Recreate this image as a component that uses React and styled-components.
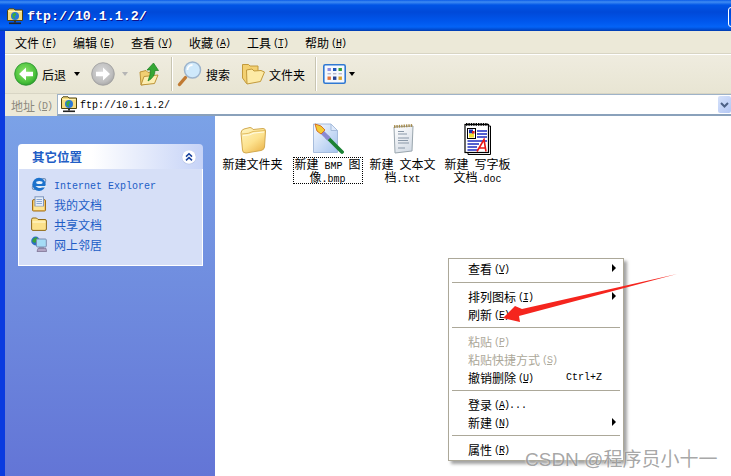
import styled, { createGlobalStyle } from 'styled-components';

const Global = createGlobalStyle`
    html, body { margin: 0; padding: 0; background: #fff; }
    body { font-family: "Noto Sans CJK SC", "Liberation Sans", sans-serif; font-size: 12px; color: #000; }
`;

const menus = [
    ['文件', 'F'], ['编辑', 'E'], ['查看', 'V'], ['收藏', 'A'], ['工具', 'T'], ['帮助', 'H'],
];

const places = [
    { icon: 'ie', label: 'Internet Explorer', latin: true },
    { icon: 'docs', label: '我的文档' },
    { icon: 'shared', label: '共享文档' },
    { icon: 'net', label: '网上邻居' },
];

function BigFolder() {
    return (
        <svg width="32" height="32" viewBox="0 0 32 32">
            <defs>
                <linearGradient id="fold" x1="0" y1="0" x2="0.7" y2="1">
                    <stop offset="0" stopColor="#fff6c4" />
                    <stop offset="0.6" stopColor="#fde28e" />
                    <stop offset="1" stopColor="#eebb55" />
                </linearGradient>
            </defs>
            <path d="M4 10 Q4 7 7 6 L13 4.5 Q15 4.5 16 6.5 L26 5.5 Q28.5 5.5 28.5 8 L27.5 24 Q27 27 24 27.5 L9 30 Q5.5 30 5.5 27 Z" fill="url(#fold)" stroke="#d2a94f" strokeWidth="1" />
            <path d="M5 11 Q12 11 16 8.5 L28 7.5" fill="none" stroke="#e2bd62" strokeWidth="1" />
            <path d="M6 12.5 Q13 12.5 17 10 L27 9" fill="none" stroke="#fffbe4" strokeWidth="1" />
        </svg>
    );
}

function NetFolder() {
    return (
        <svg width="16" height="17" viewBox="0 0 16 17">
            <path d="M0.5 2.5 L2 0.8 H7 L8 2 H15.5 V12.5 H0.5 Z" fill="#f6dc7e" stroke="#4e4310" />
            <rect x="1.5" y="3" width="13" height="1" fill="#fff3b4" />
            <circle cx="8" cy="8" r="4" fill="#2b78d8" />
            <path d="M5.4 6.3 L8 4.4 L9.4 6.4 L7.4 8.4 L8.2 11 L5.6 9.4 Z" fill="#3cac38" />
            <rect x="7" y="12.5" width="2" height="2" fill="#333" />
            <rect x="2" y="14.5" width="12" height="1.6" fill="#222" />
        </svg>
    );
}

function NavCircle({ grey }) {
    const id = grey ? 'navg' : 'nava';
    return (
        <svg width="24" height="24" viewBox="0 0 24 24">
            <defs>
                <radialGradient id={id} cx="0.45" cy="0.4" r="0.65">
                    <stop offset="0" stopColor={grey ? '#d9d9d9' : '#8ee46c'} />
                    <stop offset="0.7" stopColor={grey ? '#bebebe' : '#4cc23c'} />
                    <stop offset="1" stopColor={grey ? '#a2a2a2' : '#229a26'} />
                </radialGradient>
            </defs>
            <circle cx="12" cy="12" r="11.3" fill={`url(#${id})`} stroke={grey ? '#9c9c9c' : '#2a8f2e'} strokeWidth="0.8" />
            {grey
                ? <path d="M5 9.8 H12 V5.6 L19 12 L12 18.4 V14.2 H5 Z" fill="#fff" />
                : <path d="M19 9.8 H12 V5.6 L5 12 L12 18.4 V14.2 H19 Z" fill="#fff" />}
        </svg>
    );
}

function UpFolder() {
    return (
        <svg width="20" height="24" viewBox="0 0 20 24">
            <path d="M1 10 L7 8.5 L9 10.5 L12 10 L13 21 L2 23 Z" fill="#f2cf72" stroke="#bd9438" />
            <path d="M2 23 L5 14.5 L19 13 L15.5 21.5 Z" fill="#fdeeb0" stroke="#bd9438" />
            <path d="M9 19 Q11.5 13 11.5 8 H8 L14.5 1 L19.5 8.5 H16 Q16 15 9 19 Z" fill="#35a734" stroke="#1a7c22" strokeWidth="0.7" />
        </svg>
    );
}

function Magnifier() {
    return (
        <svg width="25" height="26" viewBox="0 0 25 26">
            <path d="M8.5 16.5 L2.5 23.5" stroke="#c07a33" strokeWidth="3.4" strokeLinecap="round" />
            <circle cx="15.5" cy="9" r="8" fill="#cfe9fb" stroke="#9db4cc" strokeWidth="1.5" />
            <path d="M10.5 9 A5 5 0 0 1 15.5 4" fill="none" stroke="#fff" strokeWidth="1.8" />
        </svg>
    );
}

function OpenFolders() {
    return (
        <svg width="23" height="22" viewBox="0 0 23 22">
            <path d="M0.5 1.5 H6.5 L8 3 H16 V15 L4.5 20.5 L0.5 15 Z" fill="#f3d071" stroke="#c29a3c" />
            <path d="M5 21 L4.5 7 L10 6 L12 8 L19 7.5 L22.5 9 L18.5 18.5 Z" fill="#fdeaa6" stroke="#c29a3c" />
        </svg>
    );
}

function Views() {
    return (
        <svg width="23" height="20" viewBox="0 0 23 20">
            <rect x="0.8" y="0.8" width="21.4" height="18.4" rx="1.5" fill="#f6f8fd" stroke="#2f78d2" strokeWidth="1.6" />
            {[
                [4.5, 4, 3, '#8c8ce0'], [10, 4, 3, '#1f56b8'], [15.5, 4, 3, '#34a03a'],
                [4.5, 9, 1.4, '#b8b8cc'], [10, 9, 1.4, '#b8b8cc'], [15.5, 9, 1.4, '#b8b8cc'],
                [4.5, 12.5, 3.4, '#e8743a'], [10, 12.5, 3.4, '#24408f'], [15.5, 12.5, 3.4, '#d9a52c'],
            ].map(([x, y, h, c]) => <rect key={`${x}${y}`} x={x} y={y} width="3.4" height={h} fill={c} />)}
        </svg>
    );
}

function Chevrons() {
    return (
        <svg width="16" height="16" viewBox="0 0 16 16">
            <circle cx="8" cy="8.4" r="7.2" fill="#b9c5e6" />
            <circle cx="8" cy="8" r="6.8" fill="#fff" />
            <path d="M5 7.6 L8 4.8 L11 7.6 M5 11.4 L8 8.6 L11 11.4" fill="none" stroke="#16409c" strokeWidth="1.5" />
        </svg>
    );
}

function PlaceIcon({ kind }) {
    if (kind === 'ie') {
        return (
            <svg width="16" height="16" viewBox="0 0 16 16">
                <ellipse cx="8" cy="8" rx="8" ry="3.4" fill="none" stroke="#6f8fb4" strokeWidth="1" transform="rotate(-35 8 8)" />
                <circle cx="8" cy="8.3" r="6.6" fill="#1c72cc" />
                <ellipse cx="8.4" cy="6.4" rx="3.2" ry="1.5" fill="#e8f2fc" />
                <path d="M4.4 10 H15.5 V11.4 L11 11.6 Q8.8 12.6 6.6 11.6 Z" fill="#e0ecf8" />
            </svg>
        );
    }
    if (kind === 'docs') {
        return (
            <svg width="16" height="16" viewBox="0 0 16 16">
                <path d="M1.5 5 Q1.5 3.5 3 3.5 H13 Q14.5 3.5 14.5 5 V14 Q14.5 15 13.5 15 H2.5 Q1.5 15 1.5 14 Z" fill="#f2c869" stroke="#a36f14" />
                <rect x="4" y="0.8" width="8.5" height="9.5" fill="#e6eefa" stroke="#7f97bd" />
                <path d="M5.5 3.5 H11 M5.5 5.5 H11 M5.5 7.5 H11" stroke="#8ba7d2" />
                <rect x="3" y="10.5" width="10" height="3.5" fill="#fde596" />
            </svg>
        );
    }
    if (kind === 'shared') {
        return (
            <svg width="16" height="14" viewBox="0 0 16 14">
                <path d="M0.6 2.5 Q0.6 1 2 1 H5.5 L7 2.5 H14 Q15.4 2.5 15.4 4 V12 Q15.4 13.4 14 13.4 H2 Q0.6 13.4 0.6 12 Z" fill="#fbe18a" stroke="#8f6a18" />
                <path d="M1.5 5 H14.5" stroke="#fff4c0" strokeWidth="1.4" />
            </svg>
        );
    }
    return (
        <svg width="16" height="16" viewBox="0 0 16 16">
            <circle cx="4.6" cy="5" r="4.4" fill="#2b6fc4" />
            <path d="M2 3 L5.4 1 L6.8 3.6 L4 7 L1.2 5.4 Z" fill="#37a338" />
            <rect x="5.5" y="3" width="9.8" height="8" rx="1" fill="#a4dcf6" stroke="#7c8cb0" />
            <rect x="8" y="11" width="5" height="1.4" fill="#8c94b0" />
            <path d="M6 15.5 L7 12.4 H15 L15.6 15.5 Z" fill="#b3a6c4" stroke="#665a7e" strokeWidth="0.6" />
        </svg>
    );
}

function BmpIcon() {
    return (
        <svg width="32" height="32" viewBox="0 0 32 32">
            <defs>
                <linearGradient id="bmpbg" x1="0" y1="0" x2="1" y2="1">
                    <stop offset="0" stopColor="#f5f9ff" />
                    <stop offset="1" stopColor="#a5c3ee" />
                </linearGradient>
            </defs>
            <path d="M1.5 1 H19 L25.5 7.5 V29.5 H1.5 Z" fill="url(#bmpbg)" stroke="#a6bcdc" />
            <path d="M19 1 V7.5 H25.5 Z" fill="#dfeafb" stroke="#a6bcdc" />
            <path d="M15 14 L30 29" stroke="#1b8234" strokeWidth="3.8" strokeLinecap="round" />
            <path d="M10 9 L17 16" stroke="#8a8ad2" strokeWidth="4.4" />
            <path d="M3 1 L9 3 L13 7 L9 11 L5 8 Z" fill="#f3cc34" stroke="#d5681c" strokeWidth="0.9" />
        </svg>
    );
}

function TxtIcon() {
    return (
        <svg width="24" height="30" viewBox="0 0 24 30">
            <defs>
                <linearGradient id="txtbg" x1="0" y1="0" x2="0.6" y2="1">
                    <stop offset="0" stopColor="#fff" />
                    <stop offset="1" stopColor="#d6dde6" />
                </linearGradient>
            </defs>
            <path d="M3 3 L22 2 L21 27 L4 29 Z" fill="url(#txtbg)" stroke="#9aa6ae" />
            <path d="M3 2.6 L22 1.4" stroke="#a58a4a" strokeWidth="2.8" strokeDasharray="1.4 1" />
            <path d="M7 7.5 H13 M7 10 H16 M7 14 H18 M7 16.5 H17 M7 19 H18 M7 24 H14" stroke="#8a98a8" strokeWidth="1.1" />
        </svg>
    );
}

function DocIcon() {
    return (
        <svg width="27" height="32" viewBox="0 0 27 32">
            <path d="M25 3 H26.5 V31.5 H4 V30" fill="none" stroke="#000" />
            <rect x="1" y="1.5" width="23.5" height="28" fill="#fff" stroke="#000" strokeWidth="1.2" />
            <path d="M2 1.4 H24" stroke="#000" strokeWidth="2.6" strokeDasharray="1.4 1" />
            <rect x="3.5" y="5.5" width="8" height="10" fill="#fff" stroke="#000" />
            <rect x="5" y="6.5" width="4" height="4" fill="#1b2fb0" />
            <rect x="5" y="10.5" width="5" height="4" fill="#f0e030" />
            <rect x="8" y="8" width="2.6" height="2.6" fill="#d82020" />
            <path d="M13 8 H23 M13 11 H23 M13 14 H23 M3.5 18 H23 M3.5 21 H15 M3.5 24 H13 M3.5 27 H14" stroke="#1c2cc0" strokeWidth="1.3" />
            <path d="M13 28.5 L20 16.5 L22 28.5 M15.5 25 H22" fill="none" stroke="#e81818" strokeWidth="1.6" />
        </svg>
    );
}

function Hot({ k }) {
    return <HotKey>(<u>{k}</u>)</HotKey>;
}

function MenuRow({ label, k, off, sub, shortcut, tail }) {
    return (
        <Row $off={off}>
            <span>{label}</span>
            <Hot k={k} />
            {tail && <Tail>{tail}</Tail>}
            {shortcut && <Shortcut>{shortcut}</Shortcut>}
            {sub && <SubArrow />}
        </Row>
    );
}

export default function App() {
    return (
        <>
        <Global />
        <Page>
            <TitleBar>
                <NetFolder />
                <TitleText>ftp://10.1.1.2/</TitleText>
                <CloseEdge />
            </TitleBar>
            <Frame>
                <MenuBar>
                    {menus.map(([name, k]) => (
                        <MenuItem key={k}>{name}<Hot k={k} /></MenuItem>
                    ))}
                </MenuBar>
                <ToolBar>
                    <ToolGroup $w={157}>
                        <NavCircle />
                        <ToolLabel>后退</ToolLabel>
                        <Caret $gap={8} />
                        <Spacer $w={11} />
                        <NavCircle grey />
                        <Caret $gap={7} $grey />
                        <Spacer $w={11} />
                        <UpFolder />
                    </ToolGroup>
                    <ToolSep $after={5} />
                    <ToolGroup $w={138}>
                        <Magnifier />
                        <ToolLabel>搜索</ToolLabel>
                        <Spacer $w={12} />
                        <OpenFolders />
                        <ToolLabel>文件夹</ToolLabel>
                    </ToolGroup>
                    <ToolSep $after={7} />
                    <ToolGroup>
                        <Views />
                        <Caret $gap={3} />
                    </ToolGroup>
                </ToolBar>
                <AddressBar>
                    <AddressLabel>地址<Hot k="D" /></AddressLabel>
                    <AddressField>
                        <NetFolder />
                        <AddressText>ftp://10.1.1.2/</AddressText>
                        <DropButton>
                            <svg width="9" height="6" viewBox="0 0 9 6">
                                <path d="M1 1 L4.5 4.5 L8 1" fill="none" stroke="#4d6185" strokeWidth="2" />
                            </svg>
                        </DropButton>
                    </AddressField>
                </AddressBar>
                <Body>
                    <Sidebar>
                        <Card>
                            <CardHead>
                                <CardTitle>其它位置</CardTitle>
                                <Chevrons />
                            </CardHead>
                            <CardBody>
                                {places.map(p => (
                                    <Place key={p.icon}>
                                        <PlaceIconBox><PlaceIcon kind={p.icon} /></PlaceIconBox>
                                        <PlaceLabel $latin={p.latin}>{p.label}</PlaceLabel>
                                    </Place>
                                ))}
                            </CardBody>
                        </Card>
                    </Sidebar>
                    <Content>
                        <FileItem>
                            <FileIcon><BigFolder /></FileIcon>
                            <FileLabel>新建文件夹</FileLabel>
                        </FileItem>
                        <FileItem>
                            <FileIcon><BmpIcon /></FileIcon>
                            <FileLabel $selected>新建<Latin> BMP </Latin>图像<Latin>.bmp</Latin></FileLabel>
                        </FileItem>
                        <FileItem>
                            <FileIcon><TxtIcon /></FileIcon>
                            <FileLabel>新建<Latin> </Latin>文本文档<Latin>.txt</Latin></FileLabel>
                        </FileItem>
                        <FileItem>
                            <FileIcon><DocIcon /></FileIcon>
                            <FileLabel>新建<Latin> </Latin>写字板文档<Latin>.doc</Latin></FileLabel>
                        </FileItem>
                    </Content>
                </Body>
            </Frame>
            <ContextMenu>
                <MenuRow label="查看" k="V" sub />
                <MenuSep $top={5} />
                <MenuRow label="排列图标" k="I" sub />
                <MenuRow label="刷新" k="E" />
                <MenuSep />
                <MenuRow label="粘贴" k="P" off />
                <MenuRow label="粘贴快捷方式" k="S" off />
                <MenuRow label="撤销删除" k="U" shortcut="Ctrl+Z" />
                <MenuSep />
                <MenuRow label="登录" k="A" tail="..." />
                <MenuRow label="新建" k="N" sub />
                <MenuSep />
                <MenuRow label="属性" k="R" />
            </ContextMenu>
            <RedArrow width="190" height="60" viewBox="0 0 190 60">
                <path d="M187 4 L32 39 L25 36 L13 48 L30 52 L29 46 Z" fill="#f5251e" />
            </RedArrow>
            <Watermark>CSDN @程序员小十一</Watermark>
        </Page>
        </>
    );
}

const Page = styled.div`
    position: relative;
    width: 731px;
    height: 476px;
    overflow: hidden;
    display: flex;
    flex-direction: column;
`;

const TitleBar = styled.div`
    height: 31px;
    flex: none;
    box-sizing: border-box;
    padding: 2px 0 0 7px;
    display: flex;
    align-items: center;
    gap: 4px;
    position: relative;
    background: linear-gradient(180deg, #0a5be8 0, #3f8cf3 2px, #0055e6 5px, #0049d8 12px, #0058ee 22px, #0463f6 27px, #0046c8 30px, #0039a8 31px);
`;

const TitleText = styled.span`
    font-family: "Liberation Mono", monospace;
    font-size: 13.3px;
    font-weight: 700;
    color: #fff;
    text-shadow: 1px 1px 0 #0f1089;
`;

const CloseEdge = styled.div`
    position: absolute;
    right: -17px;
    top: 7px;
    width: 20px;
    height: 20px;
    box-sizing: border-box;
    border: 1px solid #fff;
    border-radius: 3px;
`;

const Frame = styled.div`
    flex: 1;
    min-height: 0;
    display: flex;
    flex-direction: column;
    border-left: 5px solid #0a3be0;
    background: #ece9d8;
`;

const MenuBar = styled.div`
    height: 23px;
    flex: none;
    box-sizing: border-box;
    display: flex;
    align-items: center;
    padding-left: 10px;
    gap: 17px;
    border-bottom: 1px solid #d8d5c4;
`;

const MenuItem = styled.span`
    display: inline-flex;
    align-items: center;
    width: 41px;
    white-space: nowrap;
`;

const HotKey = styled.span`
    font-family: "Liberation Mono", monospace;
    font-size: 10px;
    line-height: 1;
    letter-spacing: -1px;
    margin-left: 2px;
    padding-top: 3px;
    u { text-underline-offset: 1px; }
`;

const Latin = styled.span`
    font-family: "Liberation Mono", monospace;
    font-size: 10px;
    line-height: 0;
`;

const Tail = styled.span`
    font-family: "Liberation Mono", monospace;
    font-size: 10px;
    line-height: 1;
    padding-top: 3px;
`;

const ToolBar = styled.div`
    height: 40px;
    flex: none;
    display: flex;
    align-items: center;
    padding-left: 9px;
    border-top: 1px solid #fff;
    border-bottom: 1px solid #d8d5c4;
    background: linear-gradient(180deg, #efecdf, #e8e5d3);
    box-sizing: border-box;
`;

const ToolGroup = styled.div`
    display: flex;
    align-items: center;
    width: ${p => (p.$w ? `${p.$w}px` : 'auto')};
`;

const ToolLabel = styled.span`
    margin-left: 4px;
    white-space: nowrap;
`;

const Spacer = styled.span`
    width: ${p => p.$w}px;
    flex: none;
`;

const Caret = styled.span`
    margin-left: ${p => p.$gap}px;
    width: 0;
    height: 0;
    border-left: 3.5px solid transparent;
    border-right: 3.5px solid transparent;
    border-top: 4px solid ${p => (p.$grey ? '#b5b5b5' : '#000')};
`;

const ToolSep = styled.span`
    width: 1px;
    height: 34px;
    margin-right: ${p => p.$after}px;
    background: #c8c5b2;
    box-shadow: 1px 0 0 #fff;
`;

const AddressBar = styled.div`
    height: 22px;
    flex: none;
    display: flex;
    align-items: stretch;
`;

const AddressLabel = styled.div`
    width: 52px;
    box-sizing: border-box;
    padding-left: 6px;
    display: flex;
    align-items: center;
    color: #8d8a7e;
`;

const AddressField = styled.div`
    flex: 1;
    display: flex;
    align-items: center;
    padding-left: 3px;
    background: #fff;
    border-top: 1px solid #9fb3c8;
    border-left: 1px solid #9fb3c8;
    border-bottom: 2px solid #8aa1bb;
    box-sizing: border-box;
`;

const AddressText = styled.span`
    flex: 1;
    margin-left: 3px;
    padding-top: 2px;
    font-family: "Liberation Mono", monospace;
    font-size: 10px;
`;

const DropButton = styled.span`
    width: 13px;
    height: 17px;
    display: flex;
    align-items: center;
    justify-content: center;
    border-radius: 2px;
    background: linear-gradient(135deg, #d6e2fa, #b4c7f4);
`;

const Body = styled.div`
    flex: 1;
    min-height: 0;
    display: flex;
    background: #fff;
`;

const Sidebar = styled.div`
    width: 210px;
    box-sizing: border-box;
    padding: 28px 12px 0 13px;
    background: linear-gradient(180deg, #7ba2e7, #6375d6);
`;

const Card = styled.div`
    width: 185px;
`;

const CardHead = styled.div`
    height: 25px;
    box-sizing: border-box;
    padding: 0 6px 0 14px;
    display: flex;
    align-items: center;
    justify-content: space-between;
    border-radius: 4px 4px 0 0;
    background: linear-gradient(90deg, #fff 40%, #c6d3f7);
`;

const CardTitle = styled.span`
    font-size: 12.5px;
    font-weight: 700;
    color: #215dc6;
`;

const CardBody = styled.div`
    height: 97px;
    box-sizing: border-box;
    padding: 5px 0 0 12px;
    background: #d6dff7;
    border: 1px solid #fff;
    border-top: none;
`;

const Place = styled.div`
    height: 20px;
    display: flex;
    align-items: center;
    color: #215dc6;
`;

const PlaceIconBox = styled.span`
    width: 23px;
    display: flex;
`;

const PlaceLabel = styled.span`
    font-family: ${p => (p.$latin ? '"Liberation Mono", monospace' : 'inherit')};
    font-size: ${p => (p.$latin ? '10px' : '12px')};
    padding-top: ${p => (p.$latin ? '4px' : '0')};
`;

const Content = styled.div`
    flex: 1;
    display: flex;
    align-items: flex-start;
    padding-top: 6px;
    background: #fff;
`;

const FileItem = styled.div`
    width: 75px;
    display: flex;
    flex-direction: column;
    align-items: center;
`;

const FileIcon = styled.div`
    height: 33px;
    display: flex;
    align-items: center;
    justify-content: center;
`;

const FileLabel = styled.div`
    width: 70px;
    margin-top: 2px;
    box-sizing: border-box;
    line-height: 12.5px;
    text-align: center;
    border: 1px dotted ${p => (p.$selected ? '#000' : 'transparent')};
`;

const ContextMenu = styled.div`
    position: absolute;
    left: 448px;
    top: 258px;
    width: 176px;
    height: 203px;
    box-sizing: border-box;
    padding: 0 3px;
    background: #fff;
    border: 1px solid #aca899;
    box-shadow: 3px 3px 3px rgba(90, 90, 90, 0.55);
`;

const Row = styled.div`
    height: 18px;
    padding-left: 16px;
    position: relative;
    display: flex;
    align-items: center;
    color: ${p => (p.$off ? '#aca899' : '#000')};
`;

const Shortcut = styled.span`
    position: absolute;
    left: 114px;
    font-family: "Liberation Mono", monospace;
    font-size: 10px;
`;

const SubArrow = styled.span`
    position: absolute;
    right: 4px;
    width: 0;
    height: 0;
    border-top: 4px solid transparent;
    border-bottom: 4px solid transparent;
    border-left: 4px solid #000;
`;

const MenuSep = styled.div`
    height: 1px;
    margin: ${p => p.$top || 4}px 0 4px;
    background: #aca899;
`;

const RedArrow = styled.svg`
    position: absolute;
    left: 490px;
    top: 270px;
`;

const Watermark = styled.div`
    position: absolute;
    left: 525px;
    top: 444px;
    font-family: "Liberation Sans", "Noto Sans CJK SC", sans-serif;
    font-size: 19px;
    white-space: nowrap;
    color: rgba(110, 110, 110, 0.62);
    text-shadow: 0 0 2px #fff;
`;
